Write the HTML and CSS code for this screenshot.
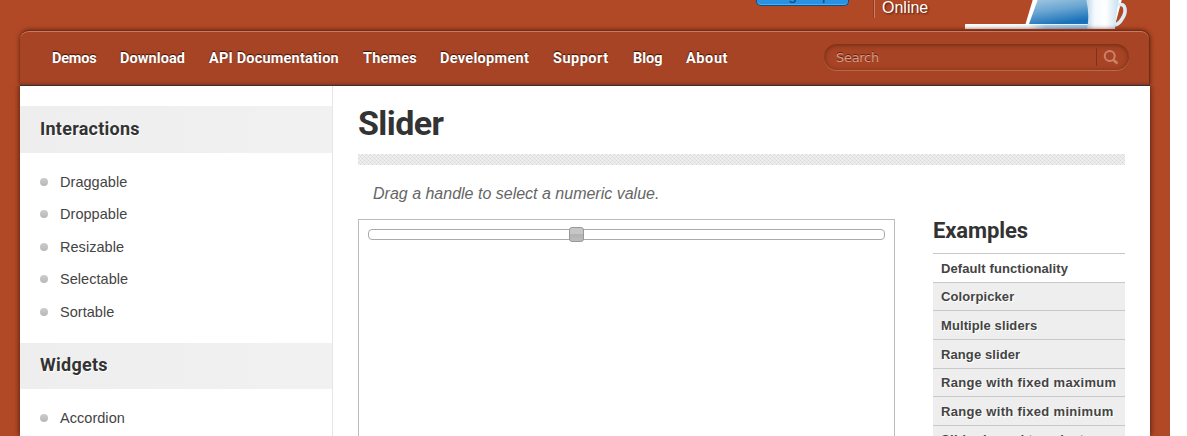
FILE: index.html
```html
<!DOCTYPE html>
<html lang="en">
<head>
<meta charset="utf-8">
<title>Slider | jQuery UI</title>
<link rel="stylesheet" href="styles.css">
</head>
<body>
<div class="page">
  <div class="promo">
    <a class="button"><span>Sign Up</span></a>
    <div class="event">Online</div>
    <svg class="laptop" width="164" height="29" viewBox="0 0 164 29">
      <defs>
        <linearGradient id="screen" x1="0" y1="0" x2=".4" y2="1"><stop offset="0" stop-color="#a5c9e1"/><stop offset=".5" stop-color="#6aa6d2"/><stop offset="1" stop-color="#1c72b9"/></linearGradient>
        <linearGradient id="base" x1="0" x2="1"><stop offset="0" stop-color="#fff"/><stop offset=".5" stop-color="#f4f9fd"/><stop offset=".64" stop-color="#a9cfed"/><stop offset="1" stop-color="#8fc4ea"/></linearGradient>
        <linearGradient id="cup" x1="0" x2="1"><stop offset="0" stop-color="#b8d5e8"/><stop offset=".25" stop-color="#f4f9fc"/><stop offset=".6" stop-color="#fff"/><stop offset="1" stop-color="#c5dfef"/></linearGradient>
      </defs>
      <path d="M68-1H157L149 29H59Z" fill="#fff"/>
      <path d="M73-1H130V24H64Z" fill="url(#screen)"/>
      <path d="M1 24H126V29H0V25Z" fill="url(#base)"/>
      <path d="M0 24.5H125" stroke="#fff" stroke-opacity=".75"/>
      <path d="M121-1Q125 14 122 29H150Q151 14 154-1Z" fill="url(#cup)"/>
      <path d="M153 5C161 2 162 12 157 19Q154 24 150 25" fill="none" stroke="#dcebf5" stroke-width="3.6"/>
    </svg>
  </div>
  <header class="bar">
    <nav class="menu">
      <a>Demos</a><a>Download</a><a>API Documentation</a><a>Themes</a><a>Development</a><a>Support</a><a>Blog</a><a>About</a>
    </nav>
    <div class="search">
      <span class="hint">Search</span>
      <span class="go"><svg width="16" height="16" viewBox="0 0 16 16"><circle cx="6.7" cy="7" r="5" fill="none" stroke="currentColor" stroke-width="2"/><path d="M10.2 10.7L14.4 14.5" stroke="currentColor" stroke-width="2.5"/></svg></span>
    </div>
  </header>
  <div class="content">
    <aside class="sidebar">
      <h3>Interactions</h3>
      <ul><li>Draggable</li><li>Droppable</li><li>Resizable</li><li>Selectable</li><li>Sortable</li></ul>
      <h3>Widgets</h3>
      <ul><li>Accordion</li></ul>
    </aside>
    <main class="main">
      <h1>Slider</h1>
      <svg class="rule" width="767" height="11"><defs><pattern id="weave" width="4" height="4" patternUnits="userSpaceOnUse"><path fill="#ededed" d="M0 0h4v4H0z"/><path fill="#dadada" d="M0 0h1v1H0zM2 2h1v1H2z"/><path fill="#e3e3e3" d="M1 1h1v1H1zM3 1h1v1H3zM1 3h1v1H1zM3 3h1v1H3z"/></pattern></defs><path fill="url(#weave)" d="M0 0h767v11H0z"/></svg>
      <p class="lead">Drag a handle to select a numeric value.</p>
      <div class="demo">
        <div class="frame"><div class="slider"><span class="handle"></span></div></div>
        <div class="examples">
          <h2>Examples</h2>
          <ul><li class="active">Default functionality</li><li>Colorpicker</li><li>Multiple sliders</li><li>Range slider</li><li class="wide">Range with fixed maximum</li><li class="wide">Range with fixed minimum</li><li class="wide">Slider bound to select</li></ul>
        </div>
      </div>
    </main>
  </div>
</div>
</body>
</html>
```
FILE: styles.css
```css
* { box-sizing: border-box; }
html { height: 100%; overflow: hidden; background: #fff; }
body { margin: 0; height: 436px; overflow: hidden; font-family: "Liberation Sans", Arial, sans-serif; color: #444; }
h1, h2, h3, p, ul { margin: 0; padding: 0; }
ul { list-style: none; }
h1, h2, h3, .menu { font-family: Roboto, "Open Sans", sans-serif; font-weight: 700; }
.page { width: 1170px; height: 436px; padding: 0 20px; background: #b24926; display: flex; flex-direction: column; overflow: hidden; }
.promo { height: 30px; flex: none; display: flex; padding-left: 736px; }
.button { width: 93px; height: 6px; flex: none; overflow: hidden; display: flex; align-items: flex-end; justify-content: center; padding-bottom: 1px; border: 1px solid #0c4f86; border-top: 0; border-radius: 0 0 5px 5px; background: #2b91e3; box-shadow: inset 0 -1px #4bb0f3; color: #174c7a; font-size: 16px; line-height: 18px; }
.event { width: 90px; height: 18px; flex: none; margin-left: 25px; padding-left: 7px; border-left: 1px solid #cb8068; box-shadow: -1px 0 #923b20; color: #fff; font-size: 16px; line-height: 15px; text-shadow: 1px 1px 2px #4b1b0c; }
.laptop { flex: none; margin-left: 1px; }
.bar { height: 56px; flex: none; padding: 0 20px 0 32px; display: flex; justify-content: space-between; border: 1px solid #732d16; border-bottom-color: #333; border-width: 1px 1px 1px 0; border-radius: 9px 9px 0 0; background: #a74425; box-shadow: inset 0 1px #cc7b62, inset 0 -3px 3px -2px #7a321b, 0 0 5px #5b200f; }
.menu { display: grid; grid-template-columns: 44px 65px 130px 53px 89px 56px 29px 42px; gap: 24px; line-height: 55px; font-size: 14.5px; letter-spacing: .2px; color: #fff; text-shadow: 0 -1px 1px #36100a; white-space: nowrap; }
.menu a:first-child { letter-spacing: -.2px; }
.menu a:nth-child(2) { letter-spacing: .1px; }
.menu a:nth-child(n+5) { letter-spacing: .3px; }
.menu a:nth-child(6) { letter-spacing: .5px; }
.menu a:nth-child(7) { letter-spacing: 0; }
.menu a:last-child { letter-spacing: .6px; }
.search { width: 305px; height: 26px; margin-top: 13px; padding-left: 12px; display: flex; align-items: center; justify-content: space-between; border-radius: 13px; box-shadow: inset 0 1px 5px #6b2812, 0 1px #bd674b; }
.hint { font: 13px "DejaVu Sans", sans-serif; letter-spacing: -.3px; color: #d69a86; text-shadow: 0 -1px #64220f; }
.go { width: 33px; height: 18px; padding: 1px 0 0 6px; border-left: 1px solid #7d321b; color: #cf816a; }
.content { height: 350px; flex: none; display: flex; background: #fff; box-shadow: 0 0 6px #3f160a; clip-path: inset(0 -10px 0 -10px); }
.sidebar { width: 313px; flex: none; padding-top: 20px; border-right: 1px solid #e5e5e5; }
.sidebar h3 { height: 47px; padding-left: 20px; line-height: 46px; font-size: 18px; letter-spacing: .25px; color: #333; background: linear-gradient(90deg, #eee, #f1f1f1); text-shadow: 1px 1px #fff; }
.sidebar h3:nth-of-type(2) { height: 46px; line-height: 44px; }
.sidebar ul { padding: 12.5px 0 14.5px 20px; }
.sidebar h3:nth-of-type(2) + ul { padding-top: 13px; }
.sidebar li { height: 32.5px; display: flex; align-items: center; gap: 12px; font-size: 14.5px; letter-spacing: .04px; }
.sidebar li::before { content: ""; width: 8px; height: 8px; border-radius: 50%; background: linear-gradient(#ccc, #b8b8b8); }
.main { width: 767px; margin-left: 25px; }
.main h1 { height: 68px; line-height: 75px; font-size: 34px; letter-spacing: -.6px; color: #333; }
.rule { display: block; }
.lead { padding: 18px 0 0 15px; height: 54px; line-height: 22px; font-size: 16px; font-style: italic; color: #666; }
.demo { display: flex; justify-content: space-between; }
.frame { width: 537px; height: 300px; padding: 9px; border: 1px solid #bbb; }
.slider { height: 11px; border: 1px solid #aaa; border-radius: 4px; padding-left: 200px; display: flex; align-items: center; }
.handle { width: 15px; height: 15px; flex: none; border: 1px solid #999; border-radius: 3px; background: linear-gradient(#c6c6c6 50%, #b3b3b3 50%, #bcbcbc); }
.examples { width: 192px; }
.examples h2 { height: 34px; line-height: 24px; font-size: 22px; letter-spacing: -.1px; color: #333; }
.examples li { height: 28.7px; padding-left: 8px; border-top: 1px solid #c8c8c8; background: #eee; color: #444; font-size: 13px; font-weight: 700; letter-spacing: .1px; line-height: 29px; white-space: nowrap; text-shadow: 1px 1px #fff; }
.examples li:nth-child(2) { line-height: 28px; }
.examples .wide { letter-spacing: .33px; line-height: 28px; }
.examples li:nth-child(6) { line-height: 29px; }
.examples .active { background: #fff; }
```
